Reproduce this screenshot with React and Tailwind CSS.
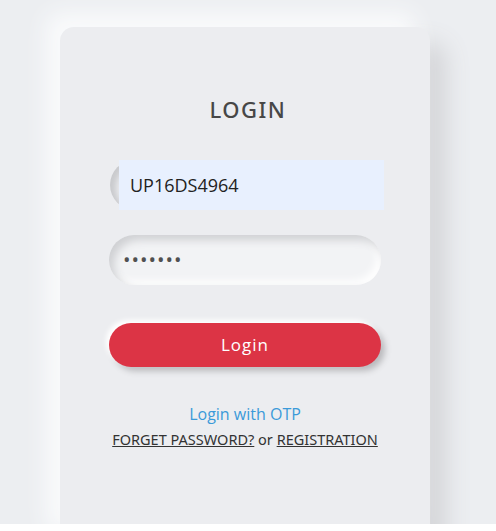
import React from "react";

export default function App() {
  const font = { fontFamily: '"Open Sans", "Noto Sans", sans-serif' };

  return (
    <div className="h-[524px] w-full overflow-hidden bg-[#eceef1] pt-[27px]" style={font}>
      <div className="ml-[60px] h-[520px] w-[370px] rounded-[14px] bg-[#ecedf0] shadow-[-14px_-14px_22px_#fafbfc,16px_16px_24px_#d4d5d8]">
        <div className="flex flex-col items-center pt-[66px]">
          {/* TITLE */}
          <h1
            className="ml-[6px] text-[22px] font-medium tracking-[1.5px] text-[#474747]"
            style={{ fontFamily: '"Noto Sans", "Open Sans", sans-serif' }}
          >
            LOGIN
          </h1>

          {/* USER ID */}
          <div className="mt-[34px] ml-[4px] flex h-[50px] w-[274px] rounded-l-full shadow-[inset_6px_3px_6px_#c9cacd]">
            <div className="ml-[9px] flex flex-1 items-center bg-[#e8f0fe] pl-[11px] text-[18px] text-[#222]">
              UP16DS4964
            </div>
          </div>

          {/* PASSWORD */}
          <div className="mt-[25px] flex h-[50px] w-[272px] items-center rounded-full bg-[#f2f3f5] pl-[14px] shadow-[inset_5px_5px_8px_#cfd0d3,inset_-4px_-4px_8px_#ffffff]">
            <span className="text-[20px] leading-none tracking-[1px] text-[#505050]">•••••••</span>
          </div>

          {/* ACTION */}
          <button className="mt-[38px] h-[44px] w-[272px] rounded-full bg-[#dc3445] text-[17px] tracking-[1px] text-white shadow-[-3px_-3px_5px_#ffffff,4px_4px_6px_#b9b9bc]">
            Login
          </button>

          <a className="mt-[35px] text-[16px] text-[#3b9ad9]">Login with OTP</a>
          <div
            className="mt-[3px] text-[14.5px] text-[#333]"
            style={{ fontFamily: '"Noto Sans", "Open Sans", sans-serif' }}
          >
            <span className="underline">FORGET PASSWORD?</span> or{" "}
            <span className="underline">REGISTRATION</span>
          </div>
        </div>
      </div>
    </div>
  );
}
